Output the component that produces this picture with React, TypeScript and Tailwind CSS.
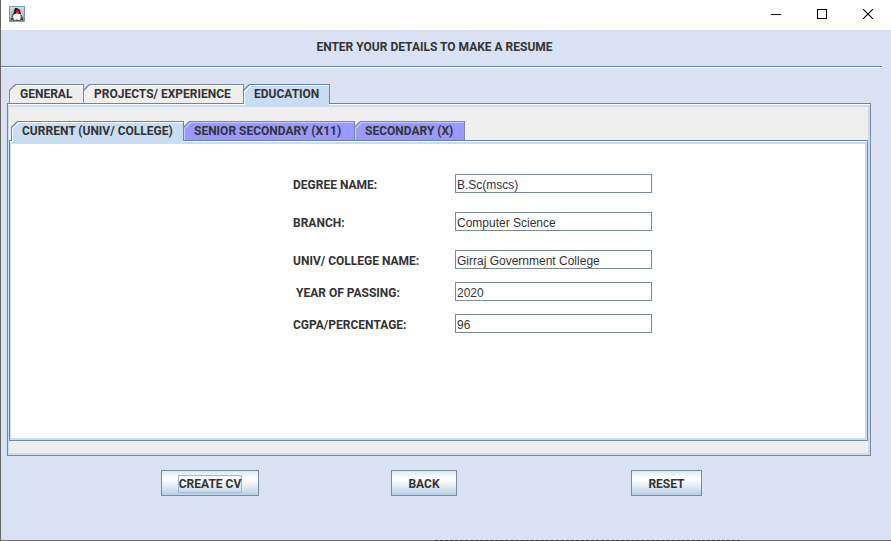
import React, { useState } from 'react';

const cut = '[clip-path:polygon(0_6px,6px_0,100%_0,100%_100%,0_100%)]';
const cutOpen =
  '[clip-path:polygon(0_6px,6px_0,100%_0,100%_20px,calc(100%-1px)_20px,calc(100%-1px)_100%,2px_100%,2px_20px,0_20px)]';

type TabProps = {
  label: string;
  selected: boolean;
  onSelect: () => void;
  width: string;
  tone?: 'gray' | 'violet';
};

function Tab({ label, selected, onSelect, width, tone = 'gray' }: TabProps) {
  const fill = selected ? 'bg-[#c8ddf2]' : tone === 'violet' ? 'bg-[#9999ff]' : 'bg-[#eeeeee]';
  const highlight = selected ? 'bg-white' : tone === 'violet' ? 'bg-[#c8c8ff]' : 'bg-[#f8f8f8]';
  return (
    <button
      type="button"
      role="tab"
      aria-selected={selected}
      onClick={onSelect}
      className={`${width} -ml-px flex flex-none whitespace-nowrap pt-px px-px font-['Roboto',sans-serif] font-bold ${
        selected ? `${cutOpen} relative z-10 -mb-[3px] h-[22px] bg-[#6382bf]` : `${cut} h-[19px] bg-[#7a8a99]`
      }`}
    >
      <span className={`${cut} ${highlight} flex h-full w-full pt-px pl-px`}>
        <span className={`${cut} ${fill} flex h-full w-full items-start pl-[9px] leading-4`}>{label}</span>
      </span>
    </button>
  );
}

function Pane({ children, className }: { children: React.ReactNode; className: string }) {
  return (
    <div
      role="tabpanel"
      className="flex flex-1 flex-col border border-t-[#6382bf] border-r-[#7a8a99] border-b-[#7a8a99] border-l-[#6382bf] bg-white pt-px"
    >
      <div className={`flex flex-1 flex-col border-2 border-l border-[#c8ddf2] ${className}`}>{children}</div>
    </div>
  );
}

function Field({ id, label, value, gap = 'mt-[13px]' }: { id: string; label: string; value: string; gap?: string }) {
  return (
    <div className={`flex h-[19px] items-center ${gap}`}>
      <label htmlFor={id} className="w-[162px] flex-none whitespace-pre pt-0.5 font-['Roboto',sans-serif] font-bold">
        {label}
      </label>
      <input
        id={id}
        defaultValue={value}
        className="h-[19px] w-[197px] border border-[#7a8a99] bg-white px-px pt-0.5 outline-none"
      />
    </div>
  );
}

const push =
  "flex h-[26px] flex-none items-center justify-center border border-[#7a8a99] bg-[linear-gradient(#dde8f3,#ffffff_30%,#ffffff_36%,#b8cfe5)] pt-0.5 font-['Roboto',sans-serif] font-bold";

function Duke() {
  return (
    <svg width="16" height="16" viewBox="0 0 16 16" aria-hidden="true">
      <defs>
        <linearGradient id="sky" x1="0" y1="0" x2="0" y2="1">
          <stop offset="0" stopColor="#d3dde4" />
          <stop offset="0.6" stopColor="#a9b9c4" />
          <stop offset="1" stopColor="#6f8494" />
        </linearGradient>
      </defs>
      <rect width="16" height="16" fill="#7f98aa" />
      <rect x="1" y="1" width="14" height="14" fill="url(#sky)" />
      <path d="M2 9 5 7H12L14 10 13 12 12 14H4L3 12 1 11Z" fill="#f4f4f4" />
      <path d="M6 2 8 2 11 4 12 8 10 8 8 7 6 8 4 9 5 5Z" fill="#1f1f1f" />
      <path d="M3 8 5 7 4 11 2 11ZM11 8 13 9 14 12 12 12Z" fill="#66696b" />
      <ellipse cx="8.4" cy="5.8" rx="1.7" ry="1.6" fill="#e2231a" />
      <path d="M2 12 4 11 5 14H2ZM12 11 14 12V14H11Z" fill="#3f474d" />
      <path d="M4 14H7L8 13 9 14H12V15H4Z" fill="#59636a" />
    </svg>
  );
}

export default function App() {
  const [section, setSection] = useState(2);
  const [level, setLevel] = useState(0);

  return (
    <div className="flex h-screen flex-col border-l border-[#666666] bg-[#d9e1f3] font-['Liberation_Sans',Arial,sans-serif] text-[12px] leading-4 text-[#333333]">
      <header className="flex h-[30px] flex-none items-start justify-between bg-white pl-2">
        <div className="pt-1.5">
          <Duke />
        </div>
        <div className="flex h-7 text-black">
          <button type="button" aria-label="Minimize" className="flex w-[46px] items-center justify-center">
            <svg width="10" height="10" viewBox="0 0 10 10" shapeRendering="crispEdges">
              <path d="M0 5.5H10" stroke="currentColor" />
            </svg>
          </button>
          <button type="button" aria-label="Maximize" className="flex w-[46px] items-center justify-center">
            <svg width="10" height="10" viewBox="0 0 10 10" shapeRendering="crispEdges">
              <rect x="0.5" y="0.5" width="9" height="9" fill="none" stroke="currentColor" />
            </svg>
          </button>
          <button type="button" aria-label="Close" className="flex w-[46px] items-center justify-center">
            <svg width="10" height="10" viewBox="0 0 10 10">
              <path d="M0 0 10 10M10 0 0 10" stroke="currentColor" strokeWidth="1.1" />
            </svg>
          </button>
        </div>
      </header>

      <h1 className="mr-[23px] flex-none pt-[9px] text-center font-['Roboto',sans-serif] font-bold">
        ENTER YOUR DETAILS TO MAKE A RESUME
      </h1>
      <hr className="mt-[11px] mr-[9px] h-0.5 flex-none border-t border-b border-t-[#6382bf] border-b-white" />

      <main className="mt-4 mr-5 ml-1.5 flex flex-1 flex-col">
        <div role="tablist" className="flex pl-[3px]">
          <Tab label="GENERAL" selected={section === 0} onSelect={() => setSection(0)} width="w-[75px]" />
          <Tab label="PROJECTS/ EXPERIENCE" selected={section === 1} onSelect={() => setSection(1)} width="w-[161px]" />
          <Tab label="EDUCATION" selected={section === 2} onSelect={() => setSection(2)} width="w-[87px]" />
        </div>
        <Pane className="bg-[#eeeeee] pt-3.5 pb-3">
          <div role="tablist" className="flex pl-[3px]">
            <Tab label="CURRENT (UNIV/ COLLEGE)" selected={level === 0} onSelect={() => setLevel(0)} width="w-[173px]" tone="violet" />
            <Tab label="SENIOR SECONDARY (X11)" selected={level === 1} onSelect={() => setLevel(1)} width="w-[172px]" tone="violet" />
            <Tab label="SECONDARY (X)" selected={level === 2} onSelect={() => setLevel(2)} width="w-[111px]" tone="violet" />
          </div>
          <Pane className="bg-white pt-[30px] pl-[282px]">
            <Field id="degree" label="DEGREE NAME:" value="B.Sc(mscs)" gap="mt-0" />
            <Field id="branch" label="BRANCH:" value="Computer Science" gap="mt-[19px]" />
            <Field id="college" label="UNIV/ COLLEGE NAME:" value="Girraj Government College" gap="mt-[19px]" />
            <Field id="year" label=" YEAR OF PASSING:" value="2020" />
            <Field id="score" label="CGPA/PERCENTAGE:" value="96" />
          </Pane>
        </Pane>
      </main>

      <footer className="flex h-[84px] flex-none items-start pt-3.5 pl-40">
        <button type="button" className={`${push} w-[98px]`}>
          <span className="border border-[#a3b8cc] whitespace-nowrap">CREATE CV</span>
        </button>
        <button type="button" className={`${push} ml-[132px] w-[66px]`}>BACK</button>
        <button type="button" className={`${push} ml-[174px] w-[71px]`}>RESET</button>
      </footer>
      <div className="h-px flex-none bg-[#6f6f6f] pl-[434px]">
        <div className="w-[305px] border-t border-dashed border-[#333333]" />
      </div>
    </div>
  );
}
